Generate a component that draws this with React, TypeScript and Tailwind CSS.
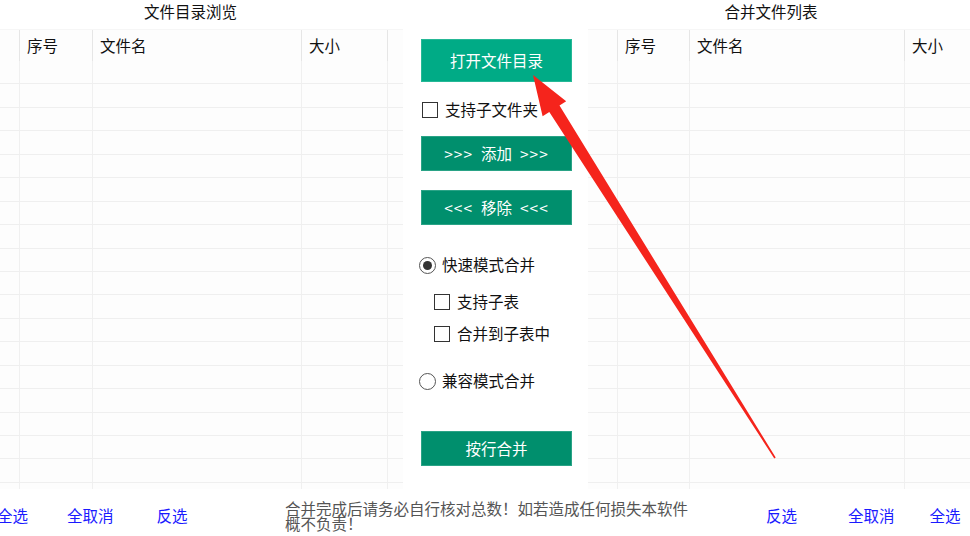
import React from "react";

const font = { fontFamily: '"Microsoft YaHei", "Noto Sans CJK SC", "Noto Sans", sans-serif' };

type Col = { w: string; label?: string };

const leftCols: Col[] = [
  { w: "w-[20px]" },
  { w: "w-[73px]", label: "序号" },
  { w: "w-[209px]", label: "文件名" },
  { w: "w-[86px]", label: "大小" },
  { w: "w-[15px]" },
];

const rightCols: Col[] = [
  { w: "w-[30px]" },
  { w: "w-[72px]", label: "序号" },
  { w: "w-[215px]", label: "文件名" },
  { w: "w-[65px]", label: "大小" },
];

const rows = Array.from({ length: 18 }, (_, i) => i);

function Table({ cols }: { cols: Col[] }) {
  return (
    <div className="flex flex-col bg-[#fdfdfd] border-t border-[#f6f6f6]">
      <div className="flex h-[31px]">
        {cols.map((c, i) => (
          <div
            key={i}
            className={`${c.w} shrink-0 flex items-center pl-[7px] text-[15.5px] text-[#111] ${
              i < cols.length - 1 ? "border-r border-[#e6e6e6]" : ""
            }`}
          >
            {c.label}
          </div>
        ))}
      </div>
      {rows.map((r) => (
        <div key={r} className="flex h-[23.45px] border-b border-[#efefef]">
          {cols.map((c, i) => (
            <div
              key={i}
              className={`${c.w} shrink-0 ${i < cols.length - 1 ? "border-r border-[#f0f0f0]" : ""}`}
            />
          ))}
        </div>
      ))}
      <div className="flex h-[6px]">
        {cols.map((c, i) => (
          <div
            key={i}
            className={`${c.w} shrink-0 ${i < cols.length - 1 ? "border-r border-[#f0f0f0]" : ""}`}
          />
        ))}
      </div>
    </div>
  );
}

function Check({ label, indent }: { label: string; indent?: boolean }) {
  return (
    <div className={`flex items-center h-[20px] ${indent ? "pl-[13px]" : "pl-[1px]"}`}>
      <span className="w-[16px] h-[16px] border border-[#333] bg-white" />
      <span className="ml-[7px] text-[15.5px] text-[#111]">{label}</span>
    </div>
  );
}

function Radio({ label, checked }: { label: string; checked?: boolean }) {
  return (
    <div className="flex items-center h-[20px] ml-[-2px]">
      <span className="w-[17px] h-[17px] rounded-full border border-[#555] bg-white flex items-center justify-center">
        {checked && <span className="w-[9px] h-[9px] rounded-full bg-[#333]" />}
      </span>
      <span className="ml-[6px] text-[15.5px] text-[#111]">{label}</span>
    </div>
  );
}

function Btn({ children, light, h }: { children: React.ReactNode; light?: boolean; h: string }) {
  return (
    <div
      className={`w-[151px] ${h} flex items-center justify-center text-white text-[15.5px] border ${
        light ? "bg-[#00ab86] border-[#26b896]" : "bg-[#008f6d] border-[#2aa386]"
      }`}
    >
      {children}
    </div>
  );
}

export default function App() {
  return (
    <div className="relative w-[970px] h-[536px] overflow-hidden bg-white" style={font}>
      <div className="flex h-[488px]">
        <div className="w-[403px] shrink-0 flex flex-col">
          <div className="h-[29px] flex items-center justify-center text-[15.5px] text-[#111] pb-[6px] pr-[22px]">
            文件目录浏览
          </div>
          <Table cols={leftCols} />
        </div>

        <div className="w-[185px] shrink-0 flex flex-col pl-[18px] pt-[39px]">
          <Btn light h="h-[43px]">打开文件目录</Btn>
          <div className="mt-[18px]">
            <Check label="支持子文件夹" />
          </div>
          <div className="mt-[16px]">
            <Btn h="h-[35px]">
              <span className="tracking-[1px]">&gt;&gt;&gt;</span>
              <span className="mx-[8px]">添加</span>
              <span className="tracking-[1px]">&gt;&gt;&gt;</span>
            </Btn>
          </div>
          <div className="mt-[19px]">
            <Btn h="h-[35px]">
              <span className="tracking-[1px]">&lt;&lt;&lt;</span>
              <span className="mx-[8px]">移除</span>
              <span className="tracking-[1px]">&lt;&lt;&lt;</span>
            </Btn>
          </div>
          <div className="mt-[30px]">
            <Radio label="快速模式合并" checked />
          </div>
          <div className="mt-[17px]">
            <Check label="支持子表" indent />
          </div>
          <div className="mt-[12px]">
            <Check label="合并到子表中" indent />
          </div>
          <div className="mt-[27px]">
            <Radio label="兼容模式合并" />
          </div>
          <div className="mt-[40px]">
            <Btn h="h-[35px]">按行合并</Btn>
          </div>
        </div>

        <div className="flex-1 flex flex-col">
          <div className="h-[29px] flex items-center justify-center text-[15.5px] text-[#111] pb-[6px] pr-[16px]">
            合并文件列表
          </div>
          <Table cols={rightCols} />
        </div>
      </div>

      <div className="flex items-center h-[48px] text-[15.5px]">
        <div className="w-[285px] shrink-0 flex items-center text-[#1a1aff] pt-[8px]">
          <span className="ml-[-3px]">全选</span>
          <span className="ml-[39px]">全取消</span>
          <span className="ml-[43px]">反选</span>
        </div>
        <div className="w-[410px] shrink-0 text-[#555] leading-[15px] pt-[7px]">
          合并完成后请务必自行核对总数！如若造成任何损失本软件概不负责！
        </div>
        <div className="flex-1 flex items-center text-[#1a1aff] pt-[8px]">
          <span className="ml-[71px]">反选</span>
          <span className="ml-[51px]">全取消</span>
          <span className="ml-[35px]">全选</span>
        </div>
      </div>

      <svg className="absolute inset-0 pointer-events-none" width="970" height="536">
        <polygon
          fill="#f5241c"
          points="533,75 566.2,101.3 559.5,105.6 775.7,457.6 774.3,458.4 549.3,112 542.6,116.3"
        />
      </svg>
    </div>
  );
}
